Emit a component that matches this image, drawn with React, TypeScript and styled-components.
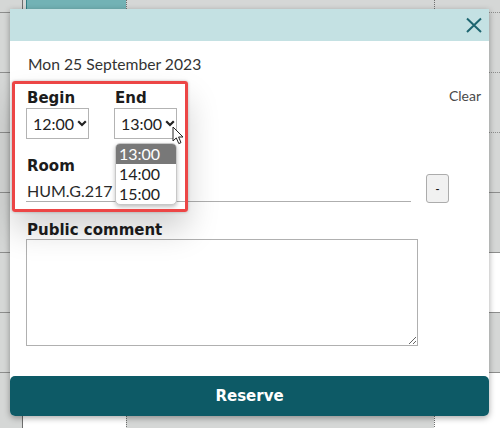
import styled, { createGlobalStyle } from 'styled-components';

const GlobalStyle = createGlobalStyle`
  html, body {
    margin: 0;
    padding: 0;
  }
  body {
    width: 500px;
    height: 428px;
    overflow: hidden;
    background: #d5d7d6;
    font-family: Lato, 'Liberation Sans', sans-serif;
  }
`;

const headingFont = `'DejaVu Sans', 'Liberation Sans', sans-serif`;

const Page = styled.div`
  position: relative;
  width: 500px;
  height: 428px;
  overflow: hidden;
`;

const Calendar = styled.div`
  display: grid;
  grid-template-columns: 22px 104px 308px 66px;
  grid-auto-rows: 60px;
  margin-top: -47px;
`;

const Cell = styled.div<{ $bg: string; $line: 'solid' | 'dotted'; $col: number }>`
  box-sizing: border-box;
  background: ${(p) => p.$bg};
  border-bottom: 1px ${(p) => p.$line} #8d8e8d;
  border-left: ${(p) =>
    p.$col === 1 ? '1px solid #6d6e6d' : p.$col > 1 ? '1px dotted #6f706f' : 'none'};
  padding-left: ${(p) => (p.$col === 1 ? '3px' : '0')};
`;

const Event = styled.div`
  height: 100%;
  background: #72b2b5;
  border-left: 1px solid #2e7d83;
`;

const Modal = styled.div`
  position: absolute;
  left: 10px;
  top: 9px;
  width: 479px;
  background: #fff;
  border-radius: 0 0 5px 5px;
  box-shadow: 0 2px 6px rgba(0, 0, 0, 0.35);
  display: flex;
  flex-direction: column;
`;

const Header = styled.div`
  height: 32px;
  background: #c4e1e3;
  display: flex;
  justify-content: flex-end;
  align-items: center;
  padding-right: 7px;
`;

const CloseButton = styled.button`
  border: none;
  background: none;
  padding: 0;
  width: 16px;
  height: 16px;
  display: flex;
  cursor: pointer;
`;

const Body = styled.div`
  box-sizing: border-box;
  height: 335px;
  padding: 13px 8px 0 16px;
  display: flex;
  flex-direction: column;
`;

const DateLine = styled.div`
  font-size: 15.7px;
  line-height: 20px;
  color: #333;
  padding-left: 2px;
`;

const TimeRow = styled.div`
  display: flex;
  justify-content: space-between;
  margin-top: 15px;
`;

const TimeFields = styled.div`
  display: flex;
  gap: 25px;
`;

const Field = styled.div`
  position: relative;
  display: flex;
  flex-direction: column;
`;

const Label = styled.div<{ $top?: number }>`
  font-family: ${headingFont};
  font-weight: bold;
  font-size: 15px;
  line-height: 18px;
  color: #1c1c1c;
  padding-left: 1px;
  margin-top: ${(p) => p.$top ?? 0}px;
`;

const SelectBox = styled.div`
  box-sizing: border-box;
  width: 63px;
  height: 31px;
  margin-top: 1px;
  border: 1px solid #b3b3b3;
  display: flex;
  align-items: center;
  gap: 3px;
  padding-left: 6px;
  font-size: 16px;
  color: #222;
`;

const Clear = styled.div`
  font-size: 14px;
  line-height: 18px;
  color: #4a4a4a;
  margin-top: -2px;
`;

const Dropdown = styled.ul`
  position: absolute;
  left: 1px;
  top: 54px;
  width: 62px;
  margin: 0;
  padding: 0;
  list-style: none;
  box-sizing: border-box;
  border: 1px solid #c8c8c8;
  border-radius: 5px;
  background: #fff;
  box-shadow: 0 2px 4px rgba(0, 0, 0, 0.25);
  overflow: hidden;
  z-index: 2;
`;

const Option = styled.li<{ $active?: boolean }>`
  height: 20px;
  line-height: 20px;
  padding-left: 3px;
  font-size: 16px;
  color: ${(p) => (p.$active ? '#fff' : '#222')};
  background: ${(p) => (p.$active ? '#787878' : 'transparent')};
`;

const Cursor = styled.svg`
  position: absolute;
  left: 58px;
  top: 37px;
  z-index: 3;
`;

const RoomRow = styled.div`
  display: flex;
  align-items: flex-end;
  gap: 15px;
  margin-top: -1px;
`;

const RoomInput = styled.div`
  box-sizing: border-box;
  width: 385px;
  height: 22px;
  padding: 1px 0 0 1px;
  line-height: 20px;
  font-size: 16px;
  color: #2a2a2a;
  border-bottom: 1px solid #aeaeae;
`;

const SmallButton = styled.button`
  box-sizing: border-box;
  width: 23px;
  height: 29px;
  margin-bottom: -1px;
  padding: 0;
  border: 1px solid #acacac;
  border-radius: 3px;
  background: #f1f1f1;
  font-family: 'Liberation Sans', sans-serif;
  font-size: 12px;
  color: #111;
`;

const Comment = styled.textarea`
  display: block;
  box-sizing: border-box;
  width: 392px;
  height: 107px;
  margin: 0;
  border: 1px solid #b0b0b0;
  border-radius: 0;
  font-family: Lato, sans-serif;
  outline: none;
`;

const ReserveButton = styled.button`
  height: 40px;
  border: none;
  border-radius: 5px;
  background: #0d5a66;
  color: #fff;
  font-family: ${headingFont};
  font-weight: bold;
  font-size: 15px;
  cursor: pointer;
`;

const Highlight = styled.div`
  position: absolute;
  left: 12px;
  top: 81px;
  width: 176px;
  height: 131px;
  box-sizing: border-box;
  border: 3px solid #ec4646;
  border-radius: 3px;
  box-shadow: 0 0 3px rgba(0, 0, 0, 0.25), 0 18px 32px rgba(0, 0, 0, 0.18);
  pointer-events: none;
  z-index: 4;
`;

const Chevron = () => (
  <svg width="10" height="7" viewBox="0 0 10 7">
    <path d="M1.2 1.3 L5 5 L8.8 1.3" fill="none" stroke="#222" strokeWidth="2.2" />
  </svg>
);

const rows = 8;
const cellBg = (row: number, col: number) => {
  if (row === 7 && (col === 1 || col === 3)) return '#fff';
  if (row === 5 && col === 3) return '#fff';
  return '#d5d7d6';
};
const cellLine = (row: number, col: number): 'solid' | 'dotted' =>
  col === 3 && row < 3 ? 'dotted' : 'solid';

const App = () => {
  return (
    <Page>
      <GlobalStyle />
      <Calendar>
        {Array.from({ length: rows }).flatMap((_, r) =>
          [0, 1, 2, 3].map((c) => (
            <Cell key={`${r}-${c}`} $bg={cellBg(r, c)} $line={cellLine(r, c)} $col={c}>
              {r === 0 && c === 1 && <Event />}
            </Cell>
          ))
        )}
      </Calendar>

      <Modal>
        <Header>
          <CloseButton aria-label="Close">
            <svg width="16" height="16" viewBox="0 0 16 16">
              <path d="M1 1.5 L15 15 M15 1.5 L1 15" stroke="#1d6570" strokeWidth="2" fill="none" />
            </svg>
          </CloseButton>
        </Header>
        <Body>
          <DateLine>Mon 25 September 2023</DateLine>
          <TimeRow>
            <TimeFields>
              <Field>
                <Label>Begin</Label>
                <SelectBox>
                  12:00
                  <Chevron />
                </SelectBox>
              </Field>
              <Field>
                <Label>End</Label>
                <SelectBox>
                  13:00
                  <Chevron />
                </SelectBox>
                <Dropdown>
                  <Option $active>13:00</Option>
                  <Option>14:00</Option>
                  <Option>15:00</Option>
                </Dropdown>
                <Cursor width="13" height="19" viewBox="0 0 13 19">
                  <path
                    d="M1 1 L1 15 L4.3 11.9 L6.8 17.6 L9 16.6 L6.6 11 L11 11 Z"
                    fill="#fff"
                    stroke="#222"
                    strokeWidth="1"
                    strokeLinejoin="round"
                  />
                </Cursor>
              </Field>
            </TimeFields>
            <Clear>Clear</Clear>
          </TimeRow>

          <Label $top={18}>Room</Label>
          <RoomRow>
            <RoomInput>HUM.G.217</RoomInput>
            <SmallButton>-</SmallButton>
          </RoomRow>

          <Label $top={19}>Public comment</Label>
          <Comment />
        </Body>
        <ReserveButton>Reserve</ReserveButton>
      </Modal>

      <Highlight />
    </Page>
  );
};

export default App;
